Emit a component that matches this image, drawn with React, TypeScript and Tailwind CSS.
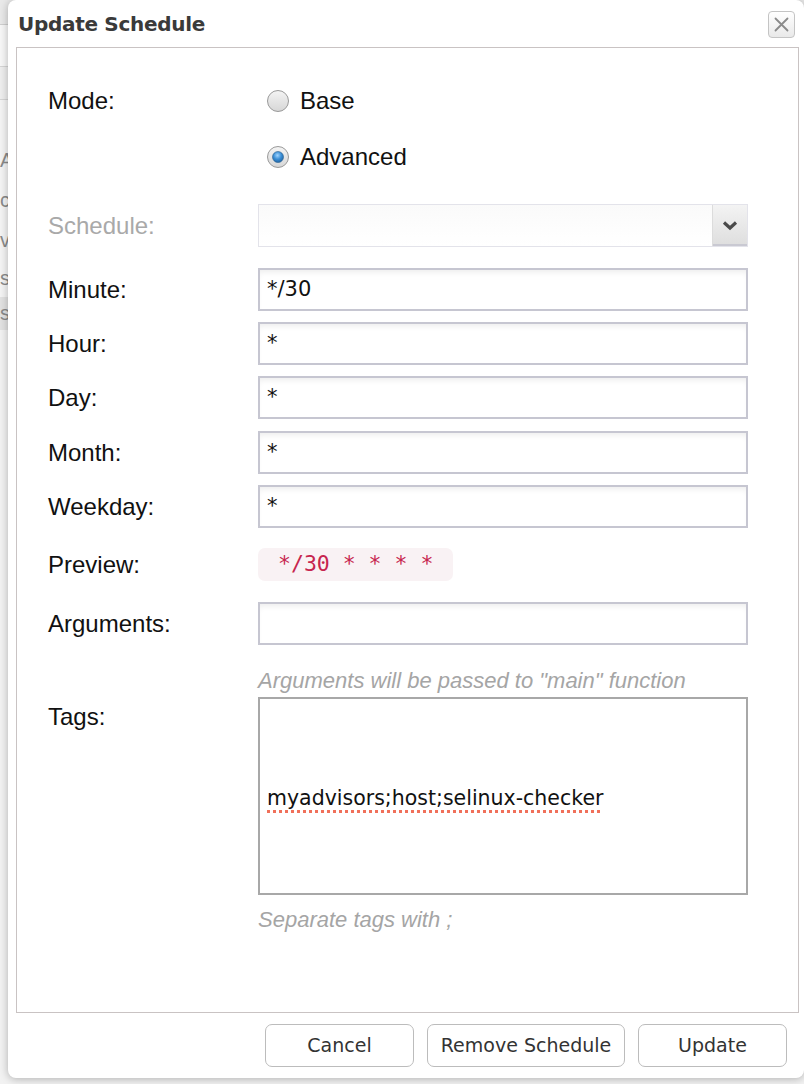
import React from "react";

const labelFont = { fontFamily: '"Liberation Sans", Arial, sans-serif' };
const dvFont = { fontFamily: '"DejaVu Sans", Verdana, sans-serif' };

function Radio({ checked }: { checked: boolean }) {
  return (
    <svg width="24" height="24" viewBox="0 0 24 24">
      <defs>
        <linearGradient id={checked ? "rg1" : "rg0"} x1="0" y1="0" x2="0" y2="1">
          <stop offset="0" stopColor="#f4f4f4" />
          <stop offset="1" stopColor="#d6d6d6" />
        </linearGradient>
        <radialGradient id="blue" cx="0.45" cy="0.35" r="0.7">
          <stop offset="0" stopColor="#9fd4ff" />
          <stop offset="0.5" stopColor="#3b8fd6" />
          <stop offset="1" stopColor="#1c5f9e" />
        </radialGradient>
      </defs>
      <circle cx="12" cy="12" r="10.5" fill={`url(#${checked ? "rg1" : "rg0"})`} stroke="#9a9a9a" strokeWidth="1" />
      {checked && <circle cx="12" cy="12" r="5.5" fill="url(#blue)" stroke="#2a5f8f" strokeWidth="0.6" />}
    </svg>
  );
}

function TextInput({ value }: { value: string }) {
  return (
    <div
      className="w-[490px] h-[43px] border-2 border-[#c6c6d1] bg-white shadow-[inset_0_5px_6px_-3px_rgba(0,0,0,0.08)] flex items-center pl-[7px] text-[21px] text-[#111]"
      style={dvFont}
    >
      {value}
    </div>
  );
}

function Label({ children, muted }: { children: React.ReactNode; muted?: boolean }) {
  return (
    <div
      className={`w-[210px] shrink-0 text-[24px] leading-[26px] ${muted ? "text-[#a9a9a9]" : "text-[#111]"}`}
      style={labelFont}
    >
      {children}
    </div>
  );
}

function FieldRow({ label, value, className }: { label: string; value: string; className: string }) {
  return (
    <div className={`flex items-center h-[43px] ${className}`}>
      <Label>{label}</Label>
      <TextInput value={value} />
    </div>
  );
}

function Button({ children, w }: { children: React.ReactNode; w: string }) {
  return (
    <div
      className={`${w} h-[43px] rounded-[7px] border-[1.5px] border-[#bcbcbc] bg-white flex items-center justify-center text-[19px] text-[#333]`}
      style={dvFont}
    >
      {children}
    </div>
  );
}

export default function App() {
  return (
    <div className="relative w-[804px] h-[1084px] overflow-hidden bg-[#f2f2f2]">
      {/* page behind the dialog */}
      <div className="flex flex-col text-[20px] text-[#8a8a8a]" style={labelFont}>
        <div className="h-[25px] bg-[#e9e9e9] border-b border-[#cfcfcf]" />
        <div className="h-[42px] bg-[#f7f7f7] border-b border-[#d5d5d5]" />
        <div className="h-[33px] bg-[#eeeeee] border-b border-[#d5d5d5]" />
        <div className="h-[40px] bg-[#f4f4f4]" />
        <div className="h-[40px] bg-[#f4f4f4] leading-[40px]">A</div>
        <div className="h-[40px] bg-[#f4f4f4] leading-[40px]">c</div>
        <div className="h-[40px] bg-[#f4f4f4] leading-[40px]">vi</div>
        <div className="h-[37px] bg-[#f4f4f4] leading-[37px]">s:</div>
        <div className="h-[33px] bg-[#e2e2e2] leading-[33px]">s</div>
        <div className="flex-1 bg-[#f2f2f2]" />
      </div>

      {/* dialog */}
      <div className="absolute left-[8px] top-0 w-[796px] h-[1078px] bg-white rounded-[8px] shadow-[0_1px_8px_rgba(0,0,0,0.28)] flex flex-col">
        <div className="h-[47px] flex items-center justify-between pl-[10px] pr-[9px]">
          <div className="text-[20px] font-bold text-[#3a3a3a] tracking-[-0.3px]" style={dvFont}>
            Update Schedule
          </div>
          <div className="w-[27px] h-[27px] mb-[-1px] rounded-[4px] border border-[#c4c4c4] bg-gradient-to-b from-[#ffffff] to-[#e9e9e9] flex items-center justify-center">
            <svg width="17" height="17" viewBox="0 0 17 17">
              <path d="M2.5 2.5 L14.5 14.5 M14.5 2.5 L2.5 14.5" stroke="#8a8a8a" strokeWidth="1.8" strokeLinecap="round" />
            </svg>
          </div>
        </div>

        <div className="ml-[8px] w-[783px] h-[966px] border border-[#c9c3c3] pl-[31px] pt-[31px] flex flex-col">
          {/* Mode */}
          <div className="flex">
            <div className="h-[44px] flex items-center">
              <Label>Mode:</Label>
            </div>
            <div className="flex flex-col">
              <div className="h-[44px] flex items-center gap-[10px] pl-[8px]">
                <Radio checked={false} />
                <span className="text-[24px] text-[#111]" style={labelFont}>Base</span>
              </div>
              <div className="h-[44px] mt-[12px] flex items-center gap-[10px] pl-[8px]">
                <Radio checked={true} />
                <span className="text-[24px] text-[#111]" style={labelFont}>Advanced</span>
              </div>
            </div>
          </div>

          {/* Schedule */}
          <div className="flex items-center h-[43px] mt-[25px]">
            <Label muted>Schedule:</Label>
            <div className="w-[490px] h-[43px] border-[1.5px] border-[#e3e3ea] bg-gradient-to-b from-[#fafafa] to-[#ffffff] flex justify-end">
              <div className="w-[35px] h-full border-l border-[#dcdcdc] bg-gradient-to-b from-[#f3f3f3] to-[#dedede] shadow-[inset_0_-2px_0_#c9c9d2] flex items-center justify-center">
                <svg width="16" height="11" viewBox="0 0 16 11">
                  <path d="M2 2.5 L8 8 L14 2.5" fill="none" stroke="#4a4a4a" strokeWidth="3.2" />
                </svg>
              </div>
            </div>
          </div>

          <FieldRow label="Minute:" value="*/30" className="mt-[21px]" />
          <FieldRow label="Hour:" value="*" className="mt-[11px]" />
          <FieldRow label="Day:" value="*" className="mt-[11px]" />
          <FieldRow label="Month:" value="*" className="mt-[12px]" />
          <FieldRow label="Weekday:" value="*" className="mt-[11px]" />

          {/* Preview */}
          <div className="flex items-center h-[33px] mt-[20px]">
            <Label>Preview:</Label>
            <div
              className="h-[33px] px-[20px] rounded-[7px] bg-[#f9f2f4] text-[#c7254e] text-[21.5px] flex items-center"
              style={{ fontFamily: '"DejaVu Sans Mono", "Liberation Mono", monospace' }}
            >
              */30 * * * *
            </div>
          </div>

          <FieldRow label="Arguments:" value="" className="mt-[21px]" />

          <div className="flex mt-[24px]">
            <div className="w-[210px]" />
            <div className="text-[22px] leading-[24px] italic text-[#a5a5a5]" style={labelFont}>
              Arguments will be passed to "main" function
            </div>
          </div>

          {/* Tags */}
          <div className="flex mt-[4px]">
            <div className="pt-[7px]">
              <Label>Tags:</Label>
            </div>
            <div className="w-[490px] h-[198px] border-2 border-[#a8a8a8] bg-white flex items-center pl-[7px] pt-[4px]">
              <span
                className="text-[20.5px] text-[#111] underline decoration-dotted decoration-[#f0705a] decoration-[3px] underline-offset-[5px]"
                style={dvFont}
              >
                myadvisors;host;selinux-checker
              </span>
            </div>
          </div>

          <div className="flex mt-[13px]">
            <div className="w-[210px]" />
            <div className="text-[22px] leading-[24px] italic text-[#a5a5a5]" style={labelFont}>
              Separate tags with ;
            </div>
          </div>
        </div>

        <div className="flex justify-end gap-[13px] mt-[11px] pr-[17px]">
          <Button w="w-[149px]">Cancel</Button>
          <Button w="w-[198px]">Remove Schedule</Button>
          <Button w="w-[149px]">Update</Button>
        </div>
      </div>
    </div>
  );
}
